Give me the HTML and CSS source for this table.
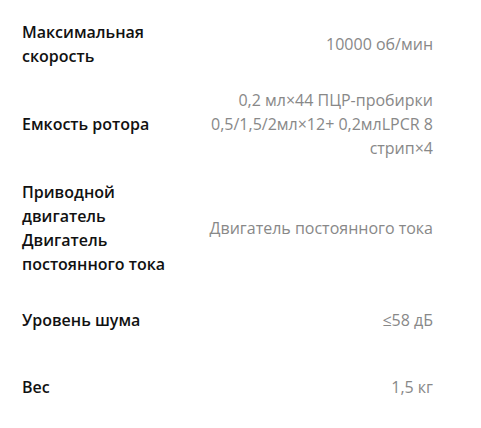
FILE: index.html
```html
<!DOCTYPE html>
<html lang="ru">
<head>
<meta charset="utf-8">
<link rel="stylesheet" href="styles.css">
</head>
<body>
<div class="specs">
  <div class="row"><div class="label">Максимальная скорость</div><div class="value">10000 об/мин</div></div>
  <div class="row"><div class="label">Емкость ротора</div><div class="value">0,2 мл×44 ПЦР-пробирки 0,5/1,5/2мл×12+ 0,2млLPCR 8 стрип×4</div></div>
  <div class="row"><div class="label">Приводной двигатель Двигатель постоянного тока</div><div class="value">Двигатель постоянного тока</div></div>
  <div class="row"><div class="label">Уровень шума</div><div class="value">≤58 дБ</div></div>
  <div class="row"><div class="label">Вес</div><div class="value">1,5 кг</div></div>
</div>
</body>
</html>
```
FILE: styles.css
```css
html, body { margin: 0; padding: 0; background: #fff; }
body { font-family: "Open Sans", "Noto Sans", sans-serif; font-size: 16px; line-height: 24px; }
.specs { padding: 10px 48px 0 22px; }
.row {
  display: grid;
  grid-template-columns: 160px 1fr;
  align-items: center;
  padding: 10px 0;
  min-height: 47px;
}
.label { font-weight: 600; color: #111; }
.value { text-align: right; color: #888; }
```
